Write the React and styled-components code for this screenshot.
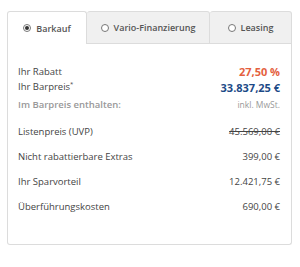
import styled, { createGlobalStyle } from 'styled-components';

const GlobalStyle = createGlobalStyle`
  body {
    margin: 0;
    background: #fff;
    font-family: "Open Sans", "DejaVu Sans", sans-serif;
    color: #444;
  }
`

const Wrapper = styled.div`
  padding: 11px 0 0 7px;
  width: 285px;
`
const Tabs = styled.div`
  display: flex;
  height: 33px;
`
const Tab = styled.div`
  width: ${p => p.w}px;
  box-sizing: border-box;
  display: flex;
  align-items: center;
  justify-content: center;
  gap: 5px;
  font-size: 9px;
  font-weight: 600;
  color: #555;
  border: 1px solid #dcdcdc;
  border-left: ${p => p.first ? '1px solid #dcdcdc' : 'none'};
  border-bottom: ${p => p.active ? 'none' : '1px solid #dcdcdc'};
  border-radius: 3px 3px 0 0;
  background: ${p => p.active ? '#fff' : '#f0f0f0'};
`
const Radio = styled.span`
  width: 8px;
  height: 8px;
  box-sizing: border-box;
  border-radius: 50%;
  border: 1px solid #777;
  background: #fff;
  display: flex;
  align-items: center;
  justify-content: center;

  &::after {
    content: '';
    width: 4px;
    height: 4px;
    border-radius: 50%;
    background: ${p => p.checked ? '#333' : 'transparent'};
  }
`
const Panel = styled.div`
  border: 1px solid #dcdcdc;
  border-top: none;
  border-radius: 0 0 3px 3px;
  height: 201px;
  box-sizing: border-box;
  padding: 19px 11px 0 10px;
`
const Row = styled.div`
  display: flex;
  justify-content: space-between;
  align-items: center;
  height: ${p => p.h}px;
  margin-top: ${p => p.gap || 0}px;
  font-size: 9.5px;
`
const Label = styled.span`
  color: ${p => p.muted ? '#999' : '#444'};
  font-weight: ${p => p.muted ? 600 : 400};
  sup { font-size: 6px; }
`
const Value = styled.span`
  color: ${p => p.color || '#444'};
  font-weight: ${p => p.bold ? 700 : 400};
  font-size: ${p => p.small ? '8.5px' : p.bold ? '11px' : '9.5px'};
  text-decoration: ${p => p.strike ? 'line-through' : 'none'};
`

const tabs = [
  { label: 'Barkauf', w: 80, active: true },
  { label: 'Vario-Finanzierung', w: 123 },
  { label: 'Leasing', w: 82 },
]

const rows = [
  { label: 'Listenpreis (UVP)', value: '45.569,00 €', strike: true, gap: 6 },
  { label: 'Nicht rabattierbare Extras', value: '399,00 €' },
  { label: 'Ihr Sparvorteil', value: '12.421,75 €' },
  { label: 'Überführungskosten', value: '690,00 €' },
]

const App = () => {
  return (
    <Wrapper>
      <GlobalStyle />
      <Tabs>
        {tabs.map((t, i) => (
          <Tab key={t.label} w={t.w} active={t.active} first={i === 0}>
            <Radio checked={t.active} />
            {t.label}
          </Tab>
        ))}
      </Tabs>
      <Panel>
        <Row h={16}>
          <Label>Ihr Rabatt</Label>
          <Value bold color="#e4603e">27,50 %</Value>
        </Row>
        <Row h={16}>
          <Label>Ihr Barpreis<sup>*</sup></Label>
          <Value bold color="#1d4a87">33.837,25 €</Value>
        </Row>
        <Row h={18}>
          <Label muted>Im Barpreis enthalten:</Label>
          <Value small color="#999">inkl. MwSt.</Value>
        </Row>
        {rows.map(r => (
          <Row key={r.label} h={25} gap={r.gap}>
            <Label>{r.label}</Label>
            <Value strike={r.strike}>{r.value}</Value>
          </Row>
        ))}
      </Panel>
    </Wrapper>
  )
}

export default App;
